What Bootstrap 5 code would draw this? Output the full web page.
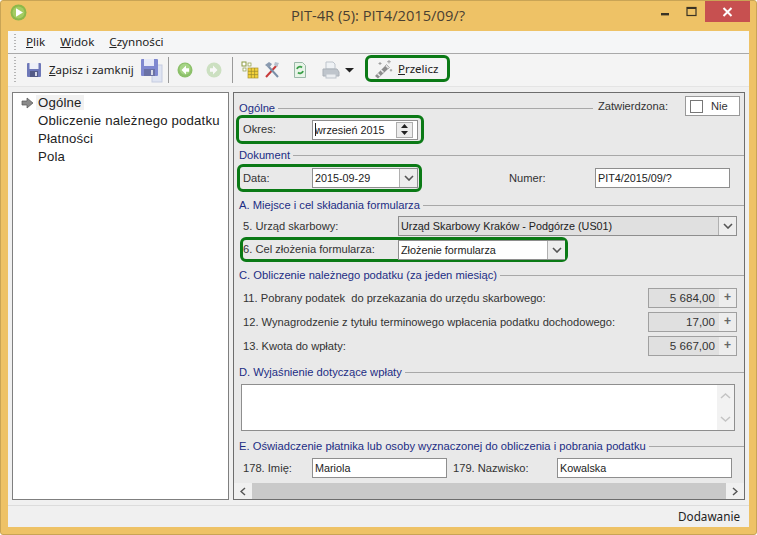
<!DOCTYPE html>
<html lang="pl"><head><meta charset="utf-8"><title>PIT-4R</title>
<link rel="stylesheet" href="https://cdn.jsdelivr.net/npm/bootstrap@5.3.0/dist/css/bootstrap.min.css">
<style>
html,body{height:535px;overflow:hidden;background:#fff;}
body{font-family:"Liberation Sans",Arial,sans-serif;font-size:12px;color:#222;}
.win{height:535px;background:#eec266;border:1px solid #c9a455;border-radius:3px;}
.titlebar{height:30px;flex:none;position:relative;}
.apptitle{font-family:"Open Sans",sans-serif;font-size:14.7px;color:#4a4032;line-height:28px;flex:1;text-align:center;padding-right:27px;}
.appicon{margin:3px 0 0 9px;flex:none;}
.winbtns{position:absolute;top:0;right:6px;height:21px;}
.wb{width:27px;display:flex;align-items:center;justify-content:center;}
.wb-close{width:45px;background:#c75050;}
.client{flex:1;min-height:0;margin:0 7px 7px;background:#f0f0f0;}
.menubar{height:22px;flex:none;background:#f5f6f7;border-bottom:1px solid #a9a9a9;box-sizing:content-box;font-family:"Noto Sans",sans-serif;font-size:11.6px;padding-left:18px;gap:15px;color:#222;}
.menubar span{line-height:21px;}
.grip{position:relative;}
.grip::before{content:"";position:absolute;left:6px;top:3px;bottom:3px;width:2px;background:repeating-linear-gradient(#b5b5b5 0 1px,transparent 1px 3px);}
.toolbar{height:33px;flex:none;background:#f4f4f4;border-bottom:1px solid #e4e4e4;font-family:"Noto Sans",sans-serif;font-size:11.5px;padding-left:18px;}
.tbtxt{margin-left:7px;width:87px;white-space:nowrap;}
.tsep{width:1px;height:26px;background:#9a9a9a;display:block;}
.sep1{margin:0 8px 0 5px;}
.sep2{margin:0 8px 0 10px;}
.gapx4{margin-left:4px;}
.gapx11{margin-left:11px;}
.gapx13{margin-left:13px;}
.hl{border:3px solid #0b7a16;border-radius:6px;}
.hl-calc{width:85px;height:27px;margin:-3px 0 0 11px;padding-left:6px;gap:5px;}
.work{flex:1;min-height:0;padding:5px 4px 0 4px;gap:4px;}
.treebox{width:217px;flex:none;background:#fff;border:1px solid #7f7f7f;padding:1px 0 0 7px;}
.treeitem{background:transparent;border:0;padding:0 0 0 18px;font-size:13.2px;line-height:18px;height:18px;color:#222;position:relative;white-space:nowrap;letter-spacing:.18px;}
.tree-cur{position:absolute;left:1px;top:3px;}
.tree-on{background:#f1f1f1;padding:0 2px;margin-left:-2px;}
.pane{flex:1;min-width:0;background:#e9e9e9;border:1px solid #6d6d6d;color:#333;font-size:11.15px;}
.panebody{flex:1;min-height:0;}
.legend{color:#1c2d84;height:14px;line-height:14px;padding-left:5px;white-space:nowrap;gap:3px;font-size:11.2px;}
.legend::after{content:"";flex:1;border-top:1px solid #a8a8a8;margin-top:1px;}
.r1{height:20px;margin-top:3px;}
.r1 .legend{flex:1;margin-top:4px;}
.zat{margin:0 15px 0 5px;padding:0;width:72px;white-space:nowrap;}
.yesno{width:55px;height:20px;background:#fff;border:1px solid #999;gap:8px;padding-left:4px;}
.yesno i{width:13px;height:13px;border:1px solid #777;background:#fff;display:block;}
.hl-a{width:188px;height:29px;margin:-1px 0 0 2px;padding-left:4px;}
.hl-b{width:185px;height:28px;margin:0 0 0 3px;padding-left:3px;}
.hl-c{width:328px;height:25px;margin:1px 0 0 6px;padding-left:0;}
.lab{flex:none;}
.fld{background:#fff;border:1px solid #8e8e8e;height:20px;padding:0 2px;font-size:10.8px;color:#222;border-radius:0;line-height:18px;box-shadow:none;}
.w-okres{width:106px;position:relative;}
.okres-l,.data-l{width:69px;}
.caretbar{display:inline-block;width:1px;height:13px;background:#222;vertical-align:-2px;margin-right:-1px;}
.spin{width:17px;height:16px;flex:none;border:1px solid #adadad;background:#ececec;margin-right:2px;}
.spin b{flex:1;display:flex;align-items:center;justify-content:center;}
.combo-arrow{width:18px;flex:none;border-left:1px solid #b0b0b0;background:#ededed;align-items:center;justify-content:center;display:flex;height:100%;}
.fldtxt{flex:1;min-width:0;white-space:nowrap;overflow:hidden;}
.dok{margin-top:4px;}
.rdata{height:28px;margin-top:2px;}
.numer{margin-left:87px;width:86px;}
.numer-f{width:135px;height:20px;}
.sec-a{margin-top:6px;}
.r5{height:20px;margin-top:4px;padding-left:9px;}
.lab5{width:155px;}
.dis{background:#e0e0e0;width:339px;}
.r6 .lab{width:155px;}
.sel6{width:167px;height:20px;border-right:0;}
.sec-c{margin-top:6px;}
.rc{height:20px;margin-top:4px;padding-left:9px;justify-content:space-between;padding-right:7px;}
.rc.first{margin-top:6px;}
.rc .lab{white-space:pre;}
.amt{width:89px;height:20px;background:#e0e0e0;border:1px solid #a0a0a0;font-size:11.6px;}
.amt span{flex:1;text-align:right;padding-right:4px;}
.amt b{width:17px;height:18px;background:#ededed;font-weight:700;text-align:center;color:#666;line-height:17px;font-size:12px;}
.sec-d{margin-top:9px;}
.memo{margin:5px 9px 0 7px;height:47px;background:#fff;border:1px solid #8e8e8e;}
.memobar{width:17px;margin-left:auto;height:100%;background:#f2f2f2;justify-content:space-between;padding:8px 0;align-items:center;}
.sec-e{margin-top:8px;}
.re{height:20px;margin-top:5px;padding-left:9px;}
.l178{width:69px;}
.f178{width:135px;}
.l179{width:110px;padding-left:6px;}
.f179{width:175px;}
.hbar{height:16px;flex:none;background:#c9c9c9;}
.hbar b{width:18px;height:16px;background:#f0f0f0;display:flex;align-items:center;justify-content:center;}
.hbar i{flex:1;}
.statusbar{height:22px;flex:none;margin-top:5px;border-top:1px solid #dcdcdc;text-align:right;padding-right:9px;font-family:"Noto Sans",sans-serif;font-size:11.7px;line-height:21px;color:#222;}
</style></head><body>
<div class="win d-flex flex-column">
 <div class="titlebar d-flex">
  <svg class="appicon" width="17" height="17" viewBox="0 0 17 17"><circle cx="8.5" cy="8.5" r="8" fill="#8db84a"/><circle cx="8.5" cy="8.5" r="6" fill="#a5cc62"/><path d="M6 4.2 13 8.5 6 12.8Z" fill="#fff"/></svg>
  <div class="apptitle">PIT-4R (5): PIT4/2015/09/?</div>
  <div class="winbtns d-flex">
   <div class="wb"><svg width="10" height="10"><rect x="1" y="6" width="8" height="2.4" fill="#3a3325"/></svg></div>
   <div class="wb"><svg width="12" height="11"><rect x="1" y="1.5" width="9" height="8" fill="none" stroke="#3a3325" stroke-width="1.2"/><rect x="1" y="1" width="9" height="2" fill="#3a3325"/></svg></div>
   <div class="wb wb-close"><svg width="11" height="10"><path d="M1.5 1 9.5 9M9.5 1 1.5 9" stroke="#fff" stroke-width="2"/></svg></div>
  </div>
 </div>
 <div class="client d-flex flex-column">
  <div class="menubar grip d-flex">
   <span><u>P</u>lik</span><span><u>W</u>idok</span><span><u>C</u>zynności</span>
  </div>
  <div class="toolbar grip d-flex align-items-center">
   <svg width="16" height="16" viewBox="0 0 16 16"><rect x="1" y="1" width="14" height="14" rx="1" fill="#6e78b8"/><rect x="3.5" y="1" width="9" height="6" fill="#eef0f8"/><rect x="4" y="9" width="8" height="6" fill="#545b86"/><rect x="9" y="10" width="2" height="4" fill="#d8dbe8"/></svg>
   <span class="tbtxt"><u>Z</u>apisz i zamknij</span>
   <svg class="ms-1" width="23" height="25" viewBox="0 0 23 25"><rect x="12" y="7" width="10" height="17" fill="#dfe4f2" stroke="#c5cce0"/><rect x="1" y="1" width="17" height="17" rx="1" fill="#7f88d0"/><rect x="4" y="1" width="10" height="7" fill="#e6e9f8"/><rect x="4" y="11" width="11" height="7" fill="#6a71a5"/><rect x="11" y="12" width="2" height="5" fill="#d8dbe8"/></svg>
   <i class="tsep sep1"></i>
   <svg width="16" height="16" viewBox="0 0 16 16"><circle cx="8" cy="8" r="7.5" fill="#8cc06a"/><circle cx="8" cy="7" r="5.5" fill="#a6d486"/><path d="M9 3.500 4.500 8 9 12.500V9.800H12V6.200H9Z" fill="#fff"/></svg>
   <svg class="gapx13" width="16" height="16" viewBox="0 0 16 16" opacity=".45"><circle cx="8" cy="8" r="7.5" fill="#9cc884"/><path d="M7 3.500 11.500 8 7 12.500V9.800H4V6.200H7Z" fill="#fff"/></svg>
   <i class="tsep sep2"></i>
   <svg width="18" height="18" viewBox="0 0 18 18"><rect x="7" y="7" width="10" height="10" fill="#f4d23c" stroke="#a89432" stroke-width=".7"/><path d="M7 10.300H17M7 13.600H17M10.300 7V17M13.600 7V17" stroke="#9a8a2c" stroke-width=".7"/><rect x="1" y="1" width="4" height="4" fill="#fff" stroke="#8a9a40"/><rect x="7" y="2" width="3" height="3" fill="#fff" stroke="#8a9a40" stroke-width=".7"/><rect x="2" y="7" width="3" height="3" fill="#fff" stroke="#8a9a40" stroke-width=".7"/></svg>
   <svg class="gapx4" width="18" height="18" viewBox="0 0 18 18"><path d="M3 16 14 4" stroke="#c83a3a" stroke-width="2"/><path d="M15 16 5 5" stroke="#7a8fa8" stroke-width="2"/><path d="M2 4 6 1 9 3 6 7Z" fill="#8a9bb0"/><path d="M12 1 16 2 14 6 11 4Z" fill="#b6c0cc"/></svg>
   <svg class="gapx11" width="16" height="18" viewBox="0 0 16 18"><path d="M2.500 1.500H10.500L13.500 4.500V16.500H2.500Z" fill="#e8f4e8" stroke="#9ab8a8"/><path d="M5 8a3 3 0 0 1 5-1.500M11 10a3 3 0 0 1-5 1.500" fill="none" stroke="#3ca04a" stroke-width="1.800"/></svg>
   <svg class="gapx13" width="20" height="20" viewBox="0 0 20 20" opacity=".7"><path d="M5 2H12L14 4V9H5Z" fill="#eef2f6" stroke="#a8b2bc"/><path d="M2 9H16L18 12V16H2Z" fill="#aab2bc" stroke="#8c96a0"/><rect x="5" y="14" width="10" height="4" fill="#e8ecf0" stroke="#a8b2bc"/></svg>
   <svg class="ms-1" width="9" height="6"><path d="M0 1H9L4.500 5.500Z" fill="#222"/></svg>
   <div class="hl hl-calc d-flex align-items-center">
    <svg width="19" height="20" viewBox="0 0 19 20"><path d="M1 17 11 7 14 10 4 19.500Z" fill="#8c8c8c"/><path d="M3.500 14.500 6 17M7 11 9.500 13.500" stroke="#ececec" stroke-width="1.500"/><path d="M11 7 12.500 5.500 15.500 8.500 14 10Z" fill="#e0e0e0" stroke="#8c8c8c" stroke-width=".6"/><path d="M15 1V4.500M13.200 2.700H16.800M6 3V6M4.500 4.500H7.500M17 10V12.500M15.800 11.200H18.200" stroke="#a0a0a0"/></svg>
    <span><u>P</u>rzelicz</span>
   </div>
  </div>
  <div class="work d-flex flex-grow-1">
   <div class="treebox list-group list-group-flush rounded-0">
    <div class="list-group-item treeitem"><svg class="tree-cur" width="13" height="12" viewBox="0 0 13 12"><path d="M6 1 12 6 6 11V8H1V4H6Z" fill="#8a8a8a" stroke="#555" stroke-width=".7"/></svg><span class="tree-on">Ogólne</span></div>
    <div class="list-group-item treeitem">Obliczenie należnego podatku</div>
    <div class="list-group-item treeitem">Płatności</div>
    <div class="list-group-item treeitem">Pola</div>
   </div>
   <div class="pane d-flex flex-column">
    <div class="panebody">
     <div class="r1 d-flex align-items-center">
      <div class="legend d-flex align-items-center">Ogólne</div>
      <span class="zat">Zatwierdzona:</span>
      <div class="yesno d-flex align-items-center me-1"><i></i><span>Nie</span></div>
     </div>
     <div class="hl hl-a d-flex align-items-center"><span class="lab okres-l">Okres:</span>
      <div class="fld w-okres d-flex align-items-center"><span class="fldtxt"><span class="caretbar"></span>wrzesień 2015</span><div class="spin d-flex flex-column"><b><svg width="7" height="4"><path d="M0 4H7L3.500 0Z" fill="#222"/></svg></b><b><svg width="7" height="4"><path d="M0 0H7L3.500 4Z" fill="#222"/></svg></b></div></div>
     </div>
     <div class="legend dok d-flex align-items-center">Dokument</div>
     <div class="rdata d-flex align-items-center">
      <div class="hl hl-b d-flex align-items-center"><span class="lab data-l">Data:</span>
       <div class="fld w-okres d-flex align-items-center pe-0"><span class="fldtxt">2015-09-29</span><span class="combo-arrow"><svg width="10" height="6"><path d="M1 1 5 5 9 1" fill="none" stroke="#555" stroke-width="1.600"/></svg></span></div>
      </div>
      <span class="numer">Numer:</span>
      <input class="form-control fld numer-f" value="PIT4/2015/09/?" aria-label="Numer">
     </div>
     <div class="legend sec-a d-flex align-items-center">A. Miejsce i cel składania formularza</div>
     <div class="r5 d-flex align-items-center"><span class="lab lab5">5. Urząd skarbowy:</span>
      <div class="fld dis d-flex align-items-center pe-0"><span class="fldtxt">Urząd Skarbowy Kraków - Podgórze (US01)</span><span class="combo-arrow"><svg width="10" height="6"><path d="M1 1 5 5 9 1" fill="none" stroke="#555" stroke-width="1.600"/></svg></span></div>
     </div>
     <div class="hl hl-c r6 d-flex align-items-center"><span class="lab">6. Cel złożenia formularza:</span>
      <div class="fld sel6 d-flex align-items-center pe-0"><span class="fldtxt">Złożenie formularza</span><span class="combo-arrow"><svg width="10" height="6"><path d="M1 1 5 5 9 1" fill="none" stroke="#555" stroke-width="1.600"/></svg></span></div>
     </div>
     <div class="legend sec-c d-flex align-items-center">C. Obliczenie należnego podatku (za jeden miesiąc)</div>
     <div class="rc first d-flex align-items-center"><span class="lab">11. Pobrany podatek  do przekazania do urzędu skarbowego:</span><div class="amt d-flex align-items-center"><span>5 684,00</span><b>+</b></div></div>
     <div class="rc d-flex align-items-center"><span class="lab">12. Wynagrodzenie z tytułu terminowego wpłacenia podatku dochodowego:</span><div class="amt d-flex align-items-center"><span>17,00</span><b>+</b></div></div>
     <div class="rc d-flex align-items-center"><span class="lab">13. Kwota do wpłaty:</span><div class="amt d-flex align-items-center"><span>5 667,00</span><b>+</b></div></div>
     <div class="legend sec-d d-flex align-items-center">D. Wyjaśnienie dotyczące wpłaty</div>
     <div class="memo d-flex"><div class="memobar d-flex flex-column"><svg width="11" height="6"><path d="M1 5 5.500 1 10 5" fill="none" stroke="#c4c4c4" stroke-width="1.500"/></svg><svg width="11" height="6"><path d="M1 1 5.500 5 10 1" fill="none" stroke="#c4c4c4" stroke-width="1.500"/></svg></div></div>
     <div class="legend sec-e d-flex align-items-center">E. Oświadczenie płatnika lub osoby wyznaczonej do obliczenia i pobrania podatku</div>
     <div class="re d-flex align-items-center"><span class="lab l178">178. Imię:</span><input class="form-control fld f178" value="Mariola" aria-label="Imię"><span class="lab l179">179. Nazwisko:</span><input class="form-control fld f179" value="Kowalska" aria-label="Nazwisko"></div>
    </div>
    <div class="hbar d-flex"><b><svg width="6" height="9"><path d="M5 1 1 4.500 5 8" fill="none" stroke="#555" stroke-width="1.500"/></svg></b><i></i><b><svg width="6" height="9"><path d="M1 1 5 4.500 1 8" fill="none" stroke="#555" stroke-width="1.500"/></svg></b></div>
   </div>
  </div>
  <div class="statusbar">Dodawanie</div>
 </div>
</div>
<script src="https://cdn.jsdelivr.net/npm/bootstrap@5.3.0/dist/js/bootstrap.bundle.min.js"></script>
</body></html>
